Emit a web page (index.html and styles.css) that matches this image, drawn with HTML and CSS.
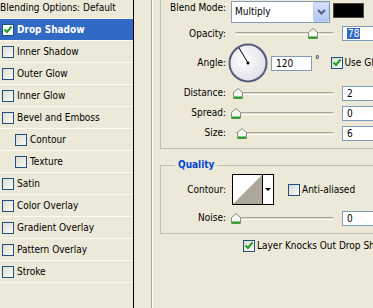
FILE: index.html
```html
<!DOCTYPE html>
<html lang="en">
  <head>
    <meta charset="UTF-8" />
    <meta name="viewport" content="width=device-width, initial-scale=1.0" />
    <title>Layer Style - Drop Shadow</title>
    <link rel="stylesheet" href="styles.css">
  </head>
  <body>
    <div class="dialog">
      <ul class="style-list">
        <li class="item head">Blending Options: Default</li>
        <li class="item selected">
          <span class="check on"><svg width="10" height="10" viewBox="0 0 10 10"><path d="M1.5 4.5 L4 7 L8.5 1.5" fill="none" stroke="#21a121" stroke-width="2"/></svg></span>Drop Shadow
        </li>
        <li class="item"><span class="check"></span>Inner Shadow</li>
        <li class="item"><span class="check"></span>Outer Glow</li>
        <li class="item"><span class="check"></span>Inner Glow</li>
        <li class="item"><span class="check"></span>Bevel and Emboss</li>
        <li class="item sub"><span class="check"></span>Contour</li>
        <li class="item sub"><span class="check"></span>Texture</li>
        <li class="item"><span class="check"></span>Satin</li>
        <li class="item"><span class="check"></span>Color Overlay</li>
        <li class="item"><span class="check"></span>Gradient Overlay</li>
        <li class="item"><span class="check"></span>Pattern Overlay</li>
        <li class="item"><span class="check"></span>Stroke</li>
      </ul>

      <div class="main">
        <div class="frame">
          <div class="group structure">
            <div class="row blend">
              <span class="label">Blend Mode:</span>
              <div class="select">
                <span>Multiply</span>
                <span class="drop"><svg width="9" height="6" viewBox="0 0 9 6"><path d="M1 1 L4.5 4.5 L8 1" fill="none" stroke="#4d6185" stroke-width="2"/></svg></span>
              </div>
              <span class="swatch"></span>
            </div>
            <div class="row opacity">
              <span class="label">Opacity:</span>
              <div class="slider">
                <span class="track"></span>
                <svg class="thumb" style="left: 77px" width="10" height="11" viewBox="0 0 10 11"><polygon points="0.5,4.5 5,0.5 9.5,4.5 9.5,10.5 0.5,10.5" fill="#f6f6f0" stroke="#7c8f80"/><line x1="1" y1="9.5" x2="9" y2="9.5" stroke="#21a121" stroke-width="2"/></svg>
              </div>
              <span class="field"><span class="hl">78</span></span>
            </div>
            <div class="row angle">
              <span class="label">Angle:</span>
              <svg class="dial" width="40" height="40" viewBox="0 0 40 40">
                <defs>
                  <radialGradient id="dialfill" cx="0.4" cy="0.4" r="0.7">
                    <stop offset="0" stop-color="#ffffff"/>
                    <stop offset="1" stop-color="#dcdce6"/>
                  </radialGradient>
                </defs>
                <circle cx="20" cy="20" r="18.5" fill="url(#dialfill)" stroke="#565a7c" stroke-width="2"/>
                <line x1="20" y1="20" x2="11" y2="5" stroke="#000" stroke-width="1"/>
                <circle cx="20" cy="20" r="1.5" fill="#000"/>
              </svg>
              <span class="field short">120</span>
              <span class="deg">°</span>
              <span class="check on global"><svg width="10" height="10" viewBox="0 0 10 10"><path d="M1.5 4.5 L4 7 L8.5 1.5" fill="none" stroke="#21a121" stroke-width="2"/></svg></span>
              <span class="check-text">Use Global Light</span>
            </div>
            <div class="row">
              <span class="label">Distance:</span>
              <div class="slider">
                <span class="track"></span>
                <svg class="thumb" style="left: 2px" width="10" height="11" viewBox="0 0 10 11"><polygon points="0.5,4.5 5,0.5 9.5,4.5 9.5,10.5 0.5,10.5" fill="#f6f6f0" stroke="#7c8f80"/><line x1="1" y1="9.5" x2="9" y2="9.5" stroke="#21a121" stroke-width="2"/></svg>
              </div>
              <span class="field">2</span>
            </div>
            <div class="row">
              <span class="label">Spread:</span>
              <div class="slider">
                <span class="track"></span>
                <svg class="thumb" style="left: 0px" width="10" height="11" viewBox="0 0 10 11"><polygon points="0.5,4.5 5,0.5 9.5,4.5 9.5,10.5 0.5,10.5" fill="#f6f6f0" stroke="#7c8f80"/><line x1="1" y1="9.5" x2="9" y2="9.5" stroke="#21a121" stroke-width="2"/></svg>
              </div>
              <span class="field">0</span>
            </div>
            <div class="row">
              <span class="label">Size:</span>
              <div class="slider">
                <span class="track"></span>
                <svg class="thumb" style="left: 6px" width="10" height="11" viewBox="0 0 10 11"><polygon points="0.5,4.5 5,0.5 9.5,4.5 9.5,10.5 0.5,10.5" fill="#f6f6f0" stroke="#7c8f80"/><line x1="1" y1="9.5" x2="9" y2="9.5" stroke="#21a121" stroke-width="2"/></svg>
              </div>
              <span class="field">6</span>
            </div>
          </div>

          <div class="group quality">
            <span class="legend">Quality</span>
            <div class="row contour">
              <span class="label">Contour:</span>
              <svg class="curve" width="42" height="31" viewBox="0 0 42 31">
                <rect x="0.5" y="0.5" width="41" height="30" fill="#fff" stroke="#000"/>
                <polygon points="1,30 30,1 30,30" fill="#aca899"/>
                <line x1="30.5" y1="0" x2="30.5" y2="31" stroke="#000"/>
                <polygon points="33,14 39,14 36,17" fill="#000"/>
              </svg>
              <span class="check anti"></span>
              <span class="check-text">Anti-aliased</span>
            </div>
            <div class="row noise">
              <span class="label">Noise:</span>
              <div class="slider">
                <span class="track"></span>
                <svg class="thumb" style="left: 0px" width="10" height="11" viewBox="0 0 10 11"><polygon points="0.5,4.5 5,0.5 9.5,4.5 9.5,10.5 0.5,10.5" fill="#f6f6f0" stroke="#7c8f80"/><line x1="1" y1="9.5" x2="9" y2="9.5" stroke="#21a121" stroke-width="2"/></svg>
              </div>
              <span class="field">0</span>
            </div>
          </div>

          <div class="knock">
            <span class="check on"><svg width="10" height="10" viewBox="0 0 10 10"><path d="M1.5 4.5 L4 7 L8.5 1.5" fill="none" stroke="#21a121" stroke-width="2"/></svg></span>
            <span class="check-text">Layer Knocks Out Drop Shadow</span>
          </div>
        </div>
      </div>
    </div>
  </body>
</html>
```

FILE: styles.css
```css
* {
  box-sizing: border-box;
}
body {
  margin: 0;
  background-color: #ece9d8;
  font-family: "DejaVu Sans Condensed", "DejaVu Sans", sans-serif;
  font-stretch: condensed;
  font-size: 10px;
  line-height: 12px;
  color: #000;
  overflow: hidden;
}
.dialog {
  display: flex;
  width: 373px;
  height: 308px;
  overflow: hidden;
}

/* left list of effects */
.style-list {
  list-style: none;
  margin: -3px 0 0;
  padding: 0;
  width: 134px;
  flex: none;
  border-right: 1px solid #000;
}
.item {
  display: flex;
  align-items: center;
  gap: 3px;
  height: 22px;
  padding-left: 2px;
  border-bottom: 1px solid #fbfaf4;
  white-space: nowrap;
}
.item.head {
  padding-left: 0;
}
.item.selected {
  background-color: #316ac5;
  color: #fff;
  font-weight: bold;
}
.item.sub {
  padding-left: 15px;
}

.check {
  display: inline-flex;
  align-items: center;
  justify-content: center;
  width: 12px;
  height: 12px;
  flex: none;
  border: 1px solid #1c5180;
  background: linear-gradient(135deg, #dcdcd4, #fbfbf8);
}
.item.selected .check {
  background: #fff;
}

/* right side */
.main {
  flex: 1;
  min-width: 0;
  padding-left: 17px;
}
.frame {
  height: 100%;
  padding-left: 8px;
  border-left: 1px solid #a5a293;
  box-shadow: inset 1px 0 #fff;
}
.group {
  border: 1px solid #c3c0b0;
  border-top: none;
  margin-right: -60px;
}
.structure {
  padding-bottom: 5px;
}
.row {
  display: flex;
  align-items: center;
  height: 20px;
  white-space: nowrap;
}
.label {
  width: 65px;
  margin-right: 5px;
  flex: none;
  text-align: right;
}
.row.blend {
  height: 24px;
  align-items: flex-start;
}
.row.blend .label {
  padding-top: 2px;
}
.row.opacity {
  height: 19px;
}
.row.angle {
  height: 40px;
}

.select {
  display: flex;
  align-items: center;
  width: 99px;
  height: 22px;
  margin-top: 1px;
  padding-left: 3px;
  border: 1px solid #7f9db9;
  background-color: #fff;
}
.drop {
  display: flex;
  align-items: center;
  justify-content: center;
  width: 16px;
  height: 20px;
  margin-left: auto;
  border: 1px solid #b9cbf3;
  border-radius: 2px;
  background: linear-gradient(#d6e2fc, #b2c7f5);
}
.swatch {
  width: 31px;
  height: 15px;
  margin: 3px 0 0 3px;
  border: 1px solid #4a4a4a;
  background-color: #000;
}

.slider {
  position: relative;
  width: 107px;
  height: 11px;
  flex: none;
}
.track {
  position: absolute;
  left: 4px;
  right: 4px;
  top: 4px;
  height: 3px;
  border-top: 1px solid #a9a697;
  border-bottom: 1px solid #fff;
  border-radius: 2px;
  background-color: #dedbcc;
}
.thumb {
  position: absolute;
  top: 0;
}

.field {
  width: 45px;
  height: 15px;
  margin-left: 4px;
  padding-left: 4px;
  flex: none;
  border: 1px solid #7f9db9;
  background-color: #fff;
  line-height: 13px;
}
.field.short {
  width: 41px;
  margin-left: 3px;
}
.hl {
  background-color: #316ac5;
  color: #fff;
  padding: 0 1px;
}
.dial {
  margin-left: -3px;
  flex: none;
}
.deg {
  margin: -6px 0 0 3px;
}
.check.global {
  margin-left: 11px;
}
.check-text {
  margin-left: 2px;
}

.quality {
  position: relative;
  margin-top: 16px;
  padding: 8px 0 7px;
  border-top: 1px solid #c3c0b0;
}
.legend {
  position: absolute;
  top: -7px;
  left: 14px;
  padding: 0 3px;
  background-color: #ece9d8;
  color: #0046d5;
  font-weight: bold;
}
.row.contour {
  height: 31px;
}
.curve {
  margin-left: 1px;
  flex: none;
}
.check.anti {
  margin-left: 14px;
}
.row.noise {
  height: 16px;
  margin-top: 5px;
}

.knock {
  display: flex;
  align-items: center;
  margin: 6px 0 0 83px;
  white-space: nowrap;
}
```
